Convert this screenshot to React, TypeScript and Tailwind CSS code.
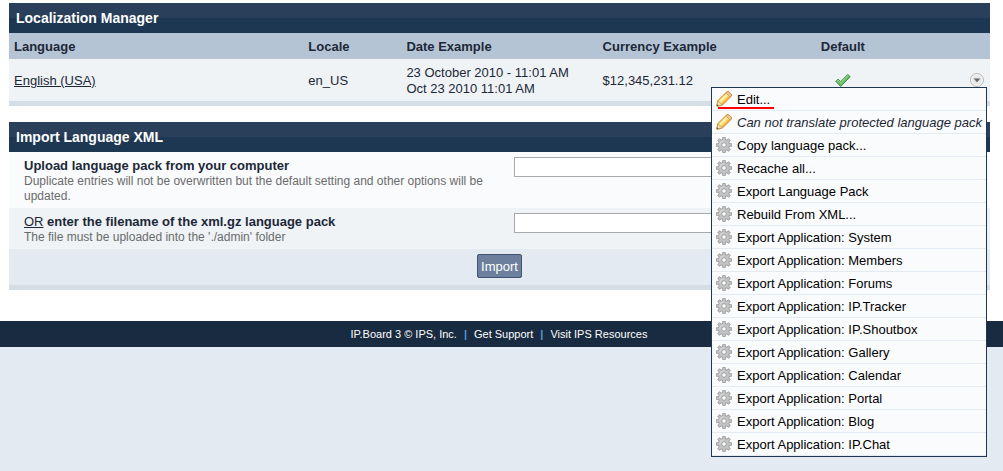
import { useState } from "react";

type MenuItem = {
  label: string;
  icon: "pencil" | "gear";
  disabled?: boolean;
  marked?: boolean;
};

const menuItems: MenuItem[] = [
  { label: "Edit...", icon: "pencil", marked: true },
  { label: "Can not translate protected language pack", icon: "pencil", disabled: true },
  { label: "Copy language pack...", icon: "gear" },
  { label: "Recache all...", icon: "gear" },
  { label: "Export Language Pack", icon: "gear" },
  { label: "Rebuild From XML...", icon: "gear" },
  { label: "Export Application: System", icon: "gear" },
  { label: "Export Application: Members", icon: "gear" },
  { label: "Export Application: Forums", icon: "gear" },
  { label: "Export Application: IP.Tracker", icon: "gear" },
  { label: "Export Application: IP.Shoutbox", icon: "gear" },
  { label: "Export Application: Gallery", icon: "gear" },
  { label: "Export Application: Calendar", icon: "gear" },
  { label: "Export Application: Portal", icon: "gear" },
  { label: "Export Application: Blog", icon: "gear" },
  { label: "Export Application: IP.Chat", icon: "gear" },
];

const teeth = [0, 45, 90, 135, 180, 225, 270, 315];

function GearIcon() {
  return (
    <svg className="size-4 shrink-0" viewBox="0 0 16 16" aria-hidden="true">
      <g fill="#b4b4b4" stroke="#8c8c8c" strokeWidth="0.6">
        {teeth.map((angle) => (
          <rect key={angle} x="6.6" y="0.3" width="2.8" height="4" rx="0.4" transform={`rotate(${angle} 8 8)`} />
        ))}
      </g>
      <circle cx="8" cy="8" r="5.6" fill="#c4c4c4" stroke="#8f8f8f" strokeWidth="0.7" />
      <g fill="#c4c4c4">
        {teeth.map((angle) => (
          <rect key={angle} x="7.1" y="1" width="1.8" height="3" transform={`rotate(${angle} 8 8)`} />
        ))}
      </g>
      <path d="M3.9 8A4.1 4.1 0 0 1 8 3.9" fill="none" stroke="#dedede" strokeWidth="1" />
      <circle cx="8" cy="8" r="2.3" fill="#fafcfe" stroke="#a0a0a0" strokeWidth="1" />
    </svg>
  );
}

function PencilIcon() {
  return (
    <svg className="size-4 shrink-0" viewBox="0 0 16 16" aria-hidden="true">
      <path d="M1.9 9.6 10.1 1.4c1.1-1.1 2.3-1.1 3.4 0l1.1 1.1c1.1 1.1 1.1 2.3 0 3.4L6.4 14.1 1.6 15.3Q.7 15.4.8 14.5z" fill="#f9d067" stroke="#bd7a24" strokeWidth="0.9" strokeLinejoin="round" />
      <path d="M3.1 9.8 10.2 2.7l1.8 1.7-7.2 7.2z" fill="#fff0a6" />
      <path d="m5.9 12.8 7.3-7.3.9.6-7.7 7.5z" fill="#eda83a" />
      <path d="m9.8 1.8.5-.4c1-.9 2.1-.9 3.1 0l1.1 1.1c.9 1 .9 2.1 0 3.1l-.4.5z" fill="#f6c58f" stroke="#c98a4b" strokeWidth="0.6" />
      <path d="m2 9.9 4 4-4.6 1.1-.4-.5z" fill="#f8dfb9" stroke="#bd8345" strokeWidth="0.5" />
      <path d="m1.2 13.2 1.5 1.6-1.5.3q-.5 0-.4-.5z" fill="#6d4a24" />
    </svg>
  );
}

function TickIcon() {
  return (
    <svg className="inline-block size-4 align-middle" viewBox="0 0 16 16" role="img" aria-label="Default language">
      <path d="m.8 9.4 2.3-2.3 2.6 2.5 7-7.1 2.5 2.2-9.5 9.8z" fill="#6cc067" stroke="#37873a" strokeWidth="0.9" strokeLinejoin="round" />
      <path d="m2.1 9 1-1 2.6 2.6 7.1-7" fill="none" stroke="#a2dc98" strokeWidth="0.9" />
    </svg>
  );
}

function ActionMenu() {
  const [open, setOpen] = useState(true);

  return (
    <div className="relative ml-auto size-[14px]">
      <button
        type="button"
        aria-label="Options"
        aria-expanded={open}
        onClick={() => setOpen(!open)}
        className="block size-[14px]"
      >
        <svg className="size-[14px]" viewBox="0 0 14 14" aria-hidden="true">
          <circle cx="7" cy="7" r="6.4" fill="#e8e8e8" stroke="#a6a6a6" strokeWidth="0.9" />
          <circle cx="7" cy="7" r="5.4" fill="none" stroke="#ffffff" strokeWidth="0.9" />
          <path d="M3.6 5.5h6.8L7 9.2z" fill="#666666" />
        </svg>
      </button>
      {open && (
        <ul className="absolute top-full -right-[3px] z-10 w-[276px] border border-[#1d3652] bg-[#fafbfd] text-black">
          {menuItems.map((item) => (
            <li key={item.label} className="border-b border-[#e4eaf2]">
              <button
                type="button"
                disabled={item.disabled}
                className="flex h-[22px] w-full items-center gap-[5px] pl-1 text-left leading-[18px] whitespace-nowrap"
              >
                {item.icon === "pencil" ? <PencilIcon /> : <GearIcon />}
                <span className="pt-[2px]">
                  {item.disabled ? <em className="text-[#1c2837]">{item.label}</em> : item.label}
                </span>
              </button>
              {item.marked && <span className="absolute top-[19px] left-[6px] h-[2px] w-14 bg-[#ff0000]" />}
            </li>
          ))}
        </ul>
      )}
    </div>
  );
}

function PanelTitle({ children }: { children: string }) {
  return (
    <h3 className="bg-[linear-gradient(#2a3f5a_50%,#1d3652_50%)] px-[7px] text-[14px] leading-[30px] font-bold text-white">
      {children}
    </h3>
  );
}

export default function App() {
  return (
    <div className="min-h-screen bg-[#e4eaf2] font-['Liberation_Sans',Arial,sans-serif] text-[13px] leading-4 text-[#1c2837]">
      <main className="bg-white pt-[3px] pr-[13px] pb-[31px] pl-[9px]">
        {/* Installed languages */}
        <section className="mb-4 border-b-[5px] border-[#d5dde5]">
          <PanelTitle>Localization Manager</PanelTitle>
          <table className="w-full table-fixed text-left">
            <thead>
              <tr className="h-[26px] bg-[#b5c4d5]">
                <th className="w-[30%] px-[5px] pt-[2px]">Language</th>
                <th className="w-[10%] px-[5px] pt-[2px]">Locale</th>
                <th className="w-[20%] px-[5px] pt-[2px]">Date Example</th>
                <th className="w-[20%] px-[5px] pt-[2px]">Currency Example</th>
                <th className="w-[10%] px-[5px] pt-[2px] text-center">Default</th>
                <th className="w-[10%] px-[5px] pt-[2px]" aria-label="Actions" />
              </tr>
            </thead>
            <tbody>
              <tr className="bg-[#eff3f6]">
                <td className="px-[5px] pt-[2px]">
                  <a href="#english" className="underline">English (USA)</a>
                </td>
                <td className="px-[5px] pt-[2px]">en_US</td>
                <td className="px-[5px] pt-[6px] pb-1 whitespace-nowrap">
                  23 October 2010 - 11:01 AM
                  <br />
                  Oct 23 2010 11:01 AM
                </td>
                <td className="px-[5px] pt-[2px]">$12,345,231.12</td>
                <td className="px-[5px] text-center">
                  <TickIcon />
                </td>
                <td className="pr-[6px]">
                  <ActionMenu />
                </td>
              </tr>
            </tbody>
          </table>
        </section>

        {/* Import form */}
        <section className="border-b-[5px] border-[#d5dde5]">
          <PanelTitle>Import Language XML</PanelTitle>
          <form onSubmit={(e) => e.preventDefault()}>
            <div className="grid grid-cols-2 bg-[#fafbfd]">
              <div className="pt-[6px] pb-1 pl-[15px]">
                <label htmlFor="upload" className="block font-bold">
                  Upload language pack from your computer
                </label>
                <p className="text-[12px] leading-[15px] text-[#6b6b6b]">
                  Duplicate entries will not be overwritten but the default setting and other options will be updated.
                </p>
              </div>
              <div className="px-[14px] pt-[5px]">
                <input id="upload" type="text" className="block h-5 w-4/5 border border-[#a9a9ad] bg-white px-1" />
              </div>
            </div>
            <div className="grid grid-cols-2 bg-[#eff3f6]">
              <div className="pt-[6px] pb-1 pl-[15px]">
                <label htmlFor="filename" className="block font-bold">
                  <span className="font-normal underline">OR</span> enter the filename of the xml.gz language pack
                </label>
                <p className="text-[12px] leading-[15px] text-[#6b6b6b]">
                  The file must be uploaded into the './admin' folder
                </p>
              </div>
              <div className="px-[14px] pt-[5px]">
                <input id="filename" type="text" className="block h-5 w-4/5 border border-[#a9a9ad] bg-white px-1" />
              </div>
            </div>
            <div className="flex justify-center bg-[#e4eaf2] pt-[5px] pb-[7px]">
              <button
                type="submit"
                className="h-6 rounded-[2px] border border-[#3f5371] bg-[#6c7f9d] px-[3px] pt-[2px] text-white"
              >
                Import
              </button>
            </div>
          </form>
        </section>
      </main>

      <footer className="flex h-[26px] items-center justify-center gap-[7px] bg-[#192b40] pr-[5px] text-[11px] text-white">
        <span>IP.Board 3 © IPS, Inc.</span>
        <span className="font-bold text-[#4a9bdc]">|</span>
        <a href="#support">Get Support</a>
        <span className="font-bold text-[#4a9bdc]">|</span>
        <a href="#resources">Visit IPS Resources</a>
      </footer>
    </div>
  );
}
